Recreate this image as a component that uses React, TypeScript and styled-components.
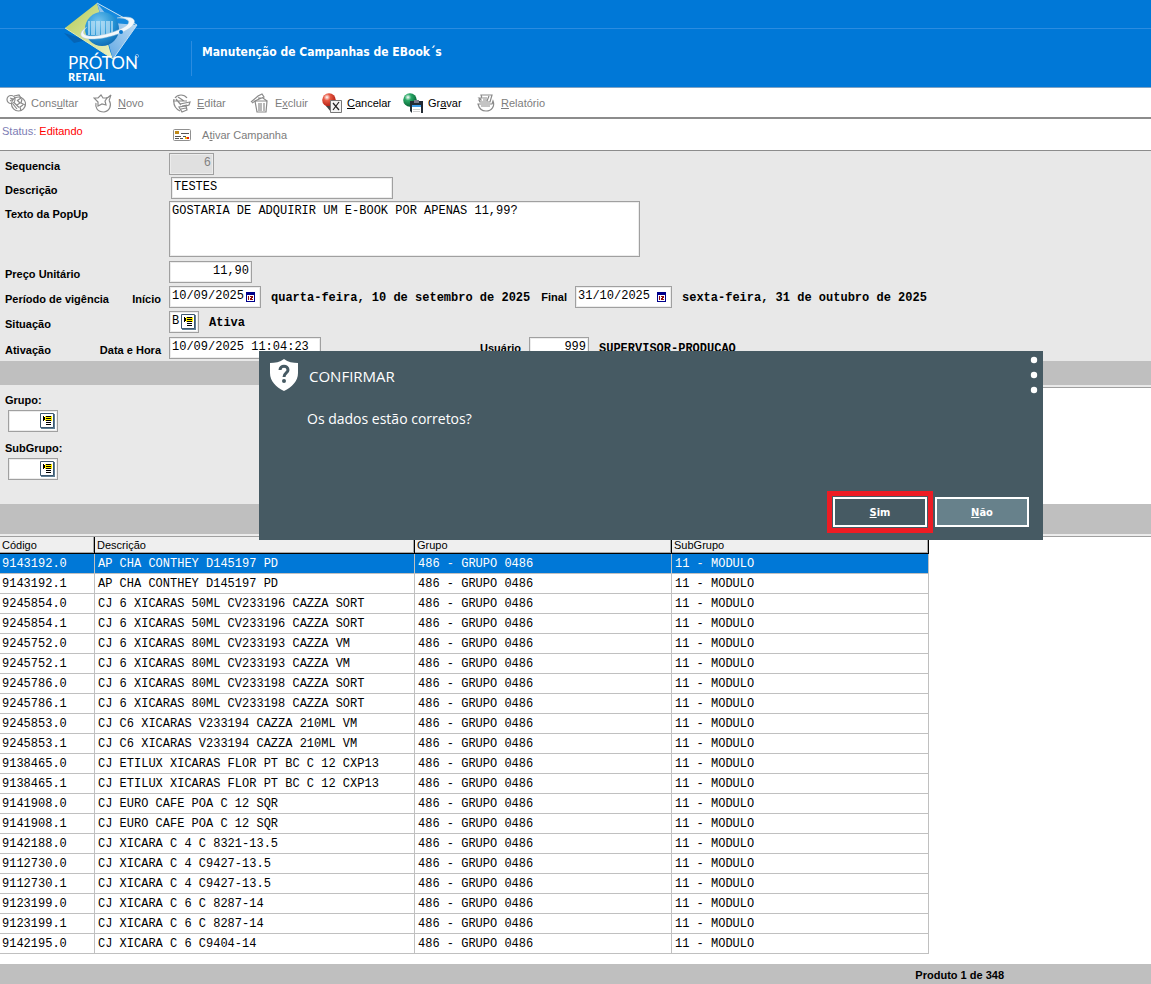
import React from 'react';
import styled, { createGlobalStyle, css } from 'styled-components';

const sans = '"Liberation Sans", Arial, sans-serif';
const mono = '"Liberation Mono", "Courier New", monospace';

const GlobalStyle = createGlobalStyle`
  * { box-sizing: border-box; }
  body { margin: 0; background: #fff; color: #000; font: 11px/14px ${sans}; }
  button, input, textarea { font: inherit; color: inherit; margin: 0; }
  button { padding: 0; border: 0; background: none; white-space: nowrap; }
`;

const Page = styled.div`
  position: relative;
  display: flex;
  flex-direction: column;
  min-height: 100vh;
`;

const Header = styled.header`
  height: 88px;
  display: flex;
  background: linear-gradient(#2b8ce0, #2b8ce0) 0 28px / 100% 1px no-repeat #0078d7;
  border-bottom: 1px solid #7fa3c4;
`;

const LogoBox = styled.div`
  width: 191px;
  padding-left: 60px;
  svg { display: block; }
`;

const Title = styled.h1`
  margin: 41px 0 0;
  padding-left: 10px;
  height: 35px;
  border-left: 1px solid #2b8ce0;
  color: #fff;
  font: bold 12px/22px "DejaVu Sans Condensed", "DejaVu Sans", Tahoma, sans-serif;
`;

const Toolbar = styled.nav`
  height: 31px;
  display: flex;
  padding-left: 6px;
  border-bottom: 2px solid #8c8c8c;
`;

const ToolButton = styled.button<{ $width?: number; $active?: boolean }>`
  width: ${p => (p.$width ? `${p.$width}px` : 'auto')};
  display: flex;
  align-items: center;
  gap: 5px;
  color: ${p => (p.$active ? '#000' : '#7d7d7d')};
  svg { flex: none; }
`;

const StatusBar = styled.div`
  height: 32px;
  display: flex;
  border-bottom: 1px solid #8c8c8c;
`;

const Status = styled.div`
  width: 173px;
  padding: 5px 0 0 2px;
  color: #7c7cb4;
  span { color: #f00; }
`;

const Form = styled.form`
  height: 210px;
  padding-top: 2px;
  background: #e8e8e8;
`;

const Row = styled.div<{ $height: number }>`
  height: ${p => p.$height}px;
  display: flex;
  align-items: flex-start;
`;

const labelText = css`
  font: bold 11px/22px ${sans};
  white-space: nowrap;
`;

const Labels = styled.div`
  width: 169px;
  padding: 2px 8px 0 5px;
  display: flex;
  justify-content: space-between;
`;

const Label = styled.label`
  ${labelText}
`;

const SideLabel = styled.label<{ $width: number }>`
  ${labelText}
  width: ${p => p.$width}px;
  padding-right: 8px;
  text-align: right;
`;

const Field = styled.div<{ $width: number; $disabled?: boolean; $indent?: boolean }>`
  width: ${p => p.$width}px;
  height: 22px;
  margin-left: ${p => (p.$indent ? 2 : 0)}px;
  padding: 0 2px;
  display: flex;
  align-items: center;
  flex: none;
  border: 1px solid #a0a0a0;
  background: ${p => (p.$disabled ? '#e0e0e0' : '#fff')};
  box-shadow: inset 0 0 0 1px #ececec;
  color: ${p => (p.$disabled ? '#808080' : '#000')};
`;

const Input = styled.input<{ $right?: boolean }>`
  flex: 1;
  min-width: 0;
  height: 18px;
  padding: 0 0 2px;
  border: 0;
  outline: 0;
  background: none;
  font: 12px/16px ${mono};
  text-align: ${p => (p.$right ? 'right' : 'left')};
`;

const TextArea = styled.textarea`
  width: 471px;
  height: 56px;
  padding: 1px 2px;
  resize: none;
  outline: 0;
  border: 1px solid #a0a0a0;
  box-shadow: inset 0 0 0 1px #ececec;
  background: #fff;
  font: 12px/16px ${mono};
`;

const Note = styled.span<{ $width?: number }>`
  width: ${p => (p.$width ? `${p.$width}px` : 'auto')};
  padding: 2px 0 0 10px;
  font: bold 12px/20px ${mono};
  white-space: nowrap;
`;

const PickerButton = styled.button<{ $inset?: boolean }>`
  display: flex;
  padding-right: ${p => (p.$inset ? 3 : 0)}px;
  svg { display: block; }
`;

const Band = styled.div<{ $height: number }>`
  height: ${p => p.$height}px;
  background: #bfbfbf;
`;

const Filters = styled.section`
  height: 119px;
  display: flex;
  background: #e9e9e9;
`;

const FilterPanel = styled.div`
  width: 400px;
  padding-top: 4px;
`;

const FilterItem = styled.div`
  height: 48px;
  padding-left: 8px;
  label { ${labelText} display: block; height: 21px; margin-left: -3px; }
`;

const Blank = styled.div`
  flex: 1;
  margin-top: 2px;
  border-top: 1px solid #a0a0a0;
  background: #fff;
`;

const GridArea = styled.section`
  border-top: 1px solid #a0a0a0;
  box-shadow: 0 -2px 0 #ececec;
  padding-bottom: 10px;
`;

const Table = styled.table`
  width: 929px;
  table-layout: fixed;
  border-collapse: separate;
  border-spacing: 0;
`;

const HeadCell = styled.th<{ $width: number }>`
  width: ${p => p.$width}px;
  height: 17px;
  padding: 0 2px;
  border-right: 1px solid #000;
  border-bottom: 1px solid #000;
  background: #efefef;
  box-shadow: inset -1px -1px 0 #a8a8a8;
  text-align: left;
  font: 11px/14px ${sans};
`;

const BodyRow = styled.tr<{ $selected: boolean }>`
  background: ${p => (p.$selected ? '#0078d7' : '#fff')};
  color: ${p => (p.$selected ? '#fff' : '#000')};
`;

const Cell = styled.td`
  height: 20px;
  padding: 1px 3px 0;
  border-right: 1px solid #c0c0c0;
  border-bottom: 1px solid #c0c0c0;
  font: 12px/18px ${mono};
  white-space: nowrap;
  &:first-child { padding-left: 2px; }
`;

const Footer = styled.footer`
  height: 20px;
  padding-right: 147px;
  background: #bfbfbf;
  font: bold 11px/22px ${sans};
  text-align: right;
`;

const Dialog = styled.div`
  position: absolute;
  top: 351px;
  left: 259px;
  right: 108px;
  height: 189px;
  padding: 5px 5px 13px 11px;
  display: flex;
  flex-direction: column;
  background: #465a63;
  color: #fff;
`;

const DialogHead = styled.div`
  display: flex;
  align-items: flex-start;
  svg { display: block; }
  > svg { margin-top: 3px; }
`;

const DialogTitle = styled.h2`
  flex: 1;
  margin: 10px 0 0 11px;
  font: 15px/20px "Open Sans", "Noto Sans", sans-serif;
`;

const Message = styled.p`
  margin: 15px 0 0 37px;
  font: 14px/20px "Open Sans", "Noto Sans", sans-serif;
`;

const Actions = styled.div`
  margin-top: auto;
  padding-right: 9px;
  display: flex;
  justify-content: flex-end;
  gap: 8px;
`;

const ActionButton = styled.button<{ $primary?: boolean }>`
  width: 94px;
  height: 30px;
  padding-top: 2px;
  border: 2px solid #fff;
  background: ${p => (p.$primary ? '#465a63' : '#67818b')};
  outline: ${p => (p.$primary ? '5px solid #ed1c24' : 'none')};
  outline-offset: 1px;
  font: bold 11px/20px "DejaVu Sans Condensed", "DejaVu Sans", Tahoma, sans-serif;
`;

const Logo = () => (
  <svg width="84" height="86" viewBox="0 0 84 86" role="img" aria-label="Próton Retail">
    <defs>
      <linearGradient id="green" x1="0" y1="0" x2="1" y2="1">
        <stop offset="0" stopColor="#b3cb58" /><stop offset="1" stopColor="#eef3c4" />
      </linearGradient>
      <linearGradient id="sky" x1="0" y1="1" x2="1" y2="0">
        <stop offset="0" stopColor="#4f9de0" /><stop offset="1" stopColor="#d4e9f8" />
      </linearGradient>
      <radialGradient id="globe" cx=".4" cy=".3" r=".8">
        <stop offset="0" stopColor="#78c6ef" /><stop offset=".55" stopColor="#2594d6" /><stop offset="1" stopColor="#0b63ad" />
      </radialGradient>
    </defs>
    <path d="M4 33 14 43 27 40Z" fill="#0564b5" />
    <path d="M37 3 5 28 53 59 50 51Z" fill="url(#green)" />
    <path d="M37 3 77 25 53 59Z" fill="url(#sky)" />
    <path d="M37 3 77 25 53 23Z" fill="#168ade" />
    <path d="M37 3 77 25 53 59" fill="none" stroke="#c4dff1" strokeWidth="1" />
    <path d="M5 28 53 59" stroke="#e4edb4" />
    <circle cx="42" cy="29" r="17" fill="url(#globe)" />
    <path d="M29 21v14M32 21v14M34 21v14M37 21v14M39 21v14M42 21v14M44 21v14M47 21v14M49 21v14M52 21v14" stroke="#c7e6f7" strokeWidth="1.3" />
    <path d="M57 18C70 15 78 19 73 25 67 33 43 40 29 39 17 38 20 31 27 27 20 34 25 36 32 36 45 36 64 29 68 24 71 19 64 18 57 18Z" fill="#f3f8fb" stroke="#a9c6da" strokeWidth=".5" />
    <circle cx="61" cy="32" r="2" fill="#0878cf" />
    <text x="8" y="69" fill="#fff" fontFamily="Lato, sans-serif" fontSize="17">PRÓTON</text>
    <text x="8" y="81" fill="#fff" fontFamily="Open Sans, sans-serif" fontSize="11" fontWeight="bold">RETAIL</text>
    <circle cx="77" cy="56" r="1.6" fill="none" stroke="#a5cdf0" strokeWidth=".7" />
  </svg>
);

const Icon = ({ children }: { children: React.ReactNode }) => (
  <svg width="20" height="20" viewBox="0 0 20 20" fill="none" stroke="#8a8a8a" strokeWidth="1.2">{children}</svg>
);

const SearchIcon = () => (
  <Icon>
    <circle cx="12.500" cy="11" r="7" />
    <circle cx="5" cy="6.500" r="4" />
    <path d="M8 9.500l5 5M7 11l4 5M4 5l3 1-3 2M8 3l5-1 2 3-3 2M11 7l3 3-3 2M16 6l-1 4 4 2M15 18l-1-4 3-2" />
  </Icon>
);
const NewIcon = () => (
  <Icon>
    <path d="M1 5h4l3-3 2 3 4 0-2 3 1 4-4-1-4 2V9L1 5Z" />
    <path d="M13 5c2 0 3-1 5-3-1 2-1 4-2 5M16 7c3 5 1 11-5 12C4 19 2 14 3 10" />
  </Icon>
);
const EditIcon = () => (
  <Icon>
    <path d="M3 5C6 1 12 1 15 5M2 6c-1 6 2 10 6 12" />
    <path d="M1 8h14M6 4l6 4M4 6l5 6M8 11l10-2-1 3-3 1 1 4-5 2-3-5 7-1M10 13l5-1M9 16l5-1" />
  </Icon>
);
const TrashIcon = () => (
  <Icon>
    <path d="M5 8h12l-1 11H7L5 8Z" />
    <path d="M1 9 8 3l4-2 2 3-7 3-5 3M8 5l5 0 4 3M9 10v8M11 10v8M14 10v8" />
  </Icon>
);
const ReportIcon = () => (
  <Icon>
    <path d="M5 2h11l-2 7H4L3 7h2l-2-2h3L5 2ZM7 5h4M7 7h4M13 3l-2 5" />
    <path d="M2 11h14l1-3c2 5-1 10-7 10-4 0-7-3-8-7ZM5 13h9" />
  </Icon>
);

const Ball = ({ id, light, dark }: { id: string; light: string; dark: string }) => (
  <>
    <defs>
      <radialGradient id={id} cx=".35" cy=".3" r=".7">
        <stop offset="0" stopColor="#fff" /><stop offset=".35" stopColor={light} /><stop offset="1" stopColor={dark} />
      </radialGradient>
    </defs>
    <circle cx="7" cy="7" r="6.800" fill={`url(#${id})`} />
  </>
);
const CancelIcon = () => (
  <svg width="20" height="20" viewBox="0 0 20 20">
    <Ball id="red" light="#e85a44" dark="#b01c10" />
    <path d="M4 13h5v6Z" fill="#444" />
    <path d="M8.500 7.500h11v12h-11Z" fill="#f4f4f4" stroke="#777" />
    <path d="m11 10 6 7M17 9l-6 8" stroke="#222" strokeWidth="1.2" />
  </svg>
);
const SaveIcon = () => (
  <svg width="20" height="20" viewBox="0 0 20 20">
    <Ball id="emerald" light="#2aa866" dark="#066334" />
    <path d="M7 8h13v12H9l-2-2Z" fill="#222a33" />
    <path d="M9 12h9v8H9Z" fill="#fff" /><path d="M9 12h9v2H9Z" fill="#3f9be8" />
    <path d="M10 16.500h7M10 18.500h7" stroke="#d0d0d0" /><path d="M11 7h5v3h-5Z" fill="#778" />
  </svg>
);
const CardIcon = () => (
  <svg width="18" height="12" viewBox="0 0 18 12">
    <rect x=".5" y=".5" width="17" height="11" rx="1" fill="#fff" stroke="#909090" />
    <path d="M2 2h4v3H2Z" fill="#c08a18" /><path d="M8 4h8v1H8ZM2 7h6v1H2ZM2 9h4v1H2ZM7 9h3v1H7ZM10 7h3v1h-3Z" fill="#555" />
    <path d="M12 8h2v2h-2Z" fill="#f3b200" /><path d="M14 8h2v2h-2Z" fill="#e02010" />
  </svg>
);
const CalendarIcon = () => (
  <svg width="9" height="10" viewBox="0 0 9 10">
    <path d="M0 0h9v10H0Z" fill="#00008b" /><path d="M1 3h7v6H1Z" fill="#fff" />
    <path d="M2 4h1v4H2ZM4 4h3v2H6v1h1v1H4V6h1V5H4Z" fill="#8b1010" />
  </svg>
);
const ListIcon = () => (
  <svg width="15" height="16" viewBox="0 0 15 16">
    <path d="M1 1h14v15H1Z" fill="#5e7f95" /><path d="M.5.5h13v14H.5Z" fill="#fff" stroke="#3d5870" />
    <path d="M5 3h7v5H5Z" fill="#ffee00" />
    <path d="M3 3v5h1V7h1V4H4V3ZM6 3h5v1H6ZM6 5h5v1H6ZM6 7h5v1H6ZM6 9h5v1H6ZM6 11h5v1H6Z" fill="#000" />
  </svg>
);
const ShieldIcon = () => (
  <svg width="28" height="32" viewBox="0 0 28 32">
    <path d="M14 0c4 3 9 4 14 4v10c0 8-6 14-14 18C6 28 0 22 0 14V4c5 0 10-1 14-4Z" fill="#fff" />
    <path d="M10 11c0-5 8-5 8 0 0 3-4 3-4 7" fill="none" stroke="#465a63" strokeWidth="3" />
    <circle cx="14" cy="22" r="2" fill="#465a63" />
  </svg>
);
const DotsIcon = () => (
  <svg width="8" height="38" viewBox="0 0 8 38" fill="#fff">
    <circle cx="4" cy="4" r="3.200" /><circle cx="4" cy="19" r="3.200" /><circle cx="4" cy="34" r="3.200" />
  </svg>
);

const products = [
  ['9143192.0', 'AP CHA CONTHEY D145197 PD'],
  ['9143192.1', 'AP CHA CONTHEY D145197 PD'],
  ['9245854.0', 'CJ 6 XICARAS 50ML CV233196 CAZZA SORT'],
  ['9245854.1', 'CJ 6 XICARAS 50ML CV233196 CAZZA SORT'],
  ['9245752.0', 'CJ 6 XICARAS 80ML CV233193 CAZZA VM'],
  ['9245752.1', 'CJ 6 XICARAS 80ML CV233193 CAZZA VM'],
  ['9245786.0', 'CJ 6 XICARAS 80ML CV233198 CAZZA SORT'],
  ['9245786.1', 'CJ 6 XICARAS 80ML CV233198 CAZZA SORT'],
  ['9245853.0', 'CJ C6 XICARAS V233194 CAZZA 210ML VM'],
  ['9245853.1', 'CJ C6 XICARAS V233194 CAZZA 210ML VM'],
  ['9138465.0', 'CJ ETILUX XICARAS FLOR PT BC C 12 CXP13'],
  ['9138465.1', 'CJ ETILUX XICARAS FLOR PT BC C 12 CXP13'],
  ['9141908.0', 'CJ EURO CAFE POA C 12 SQR'],
  ['9141908.1', 'CJ EURO CAFE POA C 12 SQR'],
  ['9142188.0', 'CJ XICARA C 4 C 8321-13.5'],
  ['9112730.0', 'CJ XICARA C 4 C9427-13.5'],
  ['9112730.1', 'CJ XICARA C 4 C9427-13.5'],
  ['9123199.0', 'CJ XICARA C 6 C 8287-14'],
  ['9123199.1', 'CJ XICARA C 6 C 8287-14'],
  ['9142195.0', 'CJ XICARA C 6 C9404-14'],
];

export default function App() {
  return (
    <Page>
      <GlobalStyle />
      <Header>
        <LogoBox><Logo /></LogoBox>
        <Title>Manutenção de Campanhas de EBook´s</Title>
      </Header>

      <Toolbar>
        <ToolButton $width={87}><SearchIcon /><span>Cons<u>u</u>ltar</span></ToolButton>
        <ToolButton $width={79}><NewIcon /><span><u>N</u>ovo</span></ToolButton>
        <ToolButton $width={78}><EditIcon /><span><u>E</u>ditar</span></ToolButton>
        <ToolButton $width={72}><TrashIcon /><span>E<u>x</u>cluir</span></ToolButton>
        <ToolButton $width={81} $active><CancelIcon /><span><u>C</u>ancelar</span></ToolButton>
        <ToolButton $width={73} $active><SaveIcon /><span>Gr<u>a</u>var</span></ToolButton>
        <ToolButton><ReportIcon /><span><u>R</u>elatório</span></ToolButton>
      </Toolbar>

      <StatusBar>
        <Status>Status: <span>Editando</span></Status>
        <ToolButton><CardIcon /><span>&nbsp;&nbsp;A<u>t</u>ivar Campanha</span></ToolButton>
      </StatusBar>

      <Form onSubmit={e => e.preventDefault()}>
        <Row $height={24}>
          <Labels><Label htmlFor="seq">Sequencia</Label></Labels>
          <Field $width={45} $disabled><Input id="seq" $right readOnly defaultValue="6" /></Field>
        </Row>
        <Row $height={24}>
          <Labels><Label htmlFor="desc">Descrição</Label></Labels>
          <Field $width={222} $indent><Input id="desc" defaultValue="TESTES" /></Field>
        </Row>
        <Row $height={60}>
          <Labels><Label htmlFor="popup">Texto da PopUp</Label></Labels>
          <TextArea id="popup" defaultValue="GOSTARIA DE ADQUIRIR UM E-BOOK POR APENAS 11,99?" />
        </Row>
        <Row $height={25}>
          <Labels><Label htmlFor="price">Preço Unitário</Label></Labels>
          <Field $width={83}><Input id="price" $right defaultValue="11,90" /></Field>
        </Row>
        <Row $height={25}>
          <Labels><Label as="span">Período de vigência</Label><Label htmlFor="start">Início</Label></Labels>
          <Field $width={92}>
            <Input id="start" defaultValue="10/09/2025" />
            <PickerButton $inset type="button" aria-label="Escolher data inicial"><CalendarIcon /></PickerButton>
          </Field>
          <Note $width={262}>quarta-feira, 10 de setembro de 2025</Note>
          <SideLabel htmlFor="end" $width={52}>Final</SideLabel>
          <Field $width={97}>
            <Input id="end" defaultValue="31/10/2025" />
            <PickerButton $inset type="button" aria-label="Escolher data final"><CalendarIcon /></PickerButton>
          </Field>
          <Note>sexta-feira, 31 de outubro de 2025</Note>
        </Row>
        <Row $height={26}>
          <Labels><Label htmlFor="status">Situação</Label></Labels>
          <Field $width={30}>
            <Input id="status" defaultValue="B" />
            <PickerButton type="button" aria-label="Escolher situação"><ListIcon /></PickerButton>
          </Field>
          <Note>Ativa</Note>
        </Row>
        <Row $height={24}>
          <Labels><Label as="span">Ativação</Label><Label htmlFor="stamp">Data e Hora</Label></Labels>
          <Field $width={152}><Input id="stamp" defaultValue="10/09/2025 11:04:23" /></Field>
          <SideLabel htmlFor="user" $width={208}>Usuário</SideLabel>
          <Field $width={60}><Input id="user" $right defaultValue="999" /></Field>
          <Note>SUPERVISOR-PRODUCAO</Note>
        </Row>
      </Form>

      <Band $height={24} />
      <Filters>
        <FilterPanel>
          <FilterItem>
            <label htmlFor="group">Grupo:</label>
            <Field $width={50}>
              <Input id="group" />
              <PickerButton type="button" aria-label="Escolher grupo"><ListIcon /></PickerButton>
            </Field>
          </FilterItem>
          <FilterItem>
            <label htmlFor="subgroup">SubGrupo:</label>
            <Field $width={50}>
              <Input id="subgroup" />
              <PickerButton type="button" aria-label="Escolher subgrupo"><ListIcon /></PickerButton>
            </Field>
          </FilterItem>
        </FilterPanel>
        <Blank />
      </Filters>
      <Band $height={32} />

      <GridArea>
        <Table>
          <thead>
            <tr>
              <HeadCell $width={95}>Código</HeadCell>
              <HeadCell $width={320}>Descrição</HeadCell>
              <HeadCell $width={257}>Grupo</HeadCell>
              <HeadCell $width={257}>SubGrupo</HeadCell>
            </tr>
          </thead>
          <tbody>
            {products.map(([code, name], i) => (
              <BodyRow key={code} $selected={i === 0}>
                <Cell>{code}</Cell>
                <Cell>{name}</Cell>
                <Cell>486 - GRUPO 0486</Cell>
                <Cell>11 - MODULO</Cell>
              </BodyRow>
            ))}
          </tbody>
        </Table>
      </GridArea>
      <Footer>Produto 1 de 348</Footer>

      <Dialog role="dialog" aria-label="Confirmar">
        <DialogHead>
          <ShieldIcon />
          <DialogTitle>CONFIRMAR</DialogTitle>
          <PickerButton type="button" aria-label="Mais opções"><DotsIcon /></PickerButton>
        </DialogHead>
        <Message>Os dados estão corretos?</Message>
        <Actions>
          <ActionButton $primary><u>S</u>im</ActionButton>
          <ActionButton><u>N</u>ão</ActionButton>
        </Actions>
      </Dialog>
    </Page>
  );
}
